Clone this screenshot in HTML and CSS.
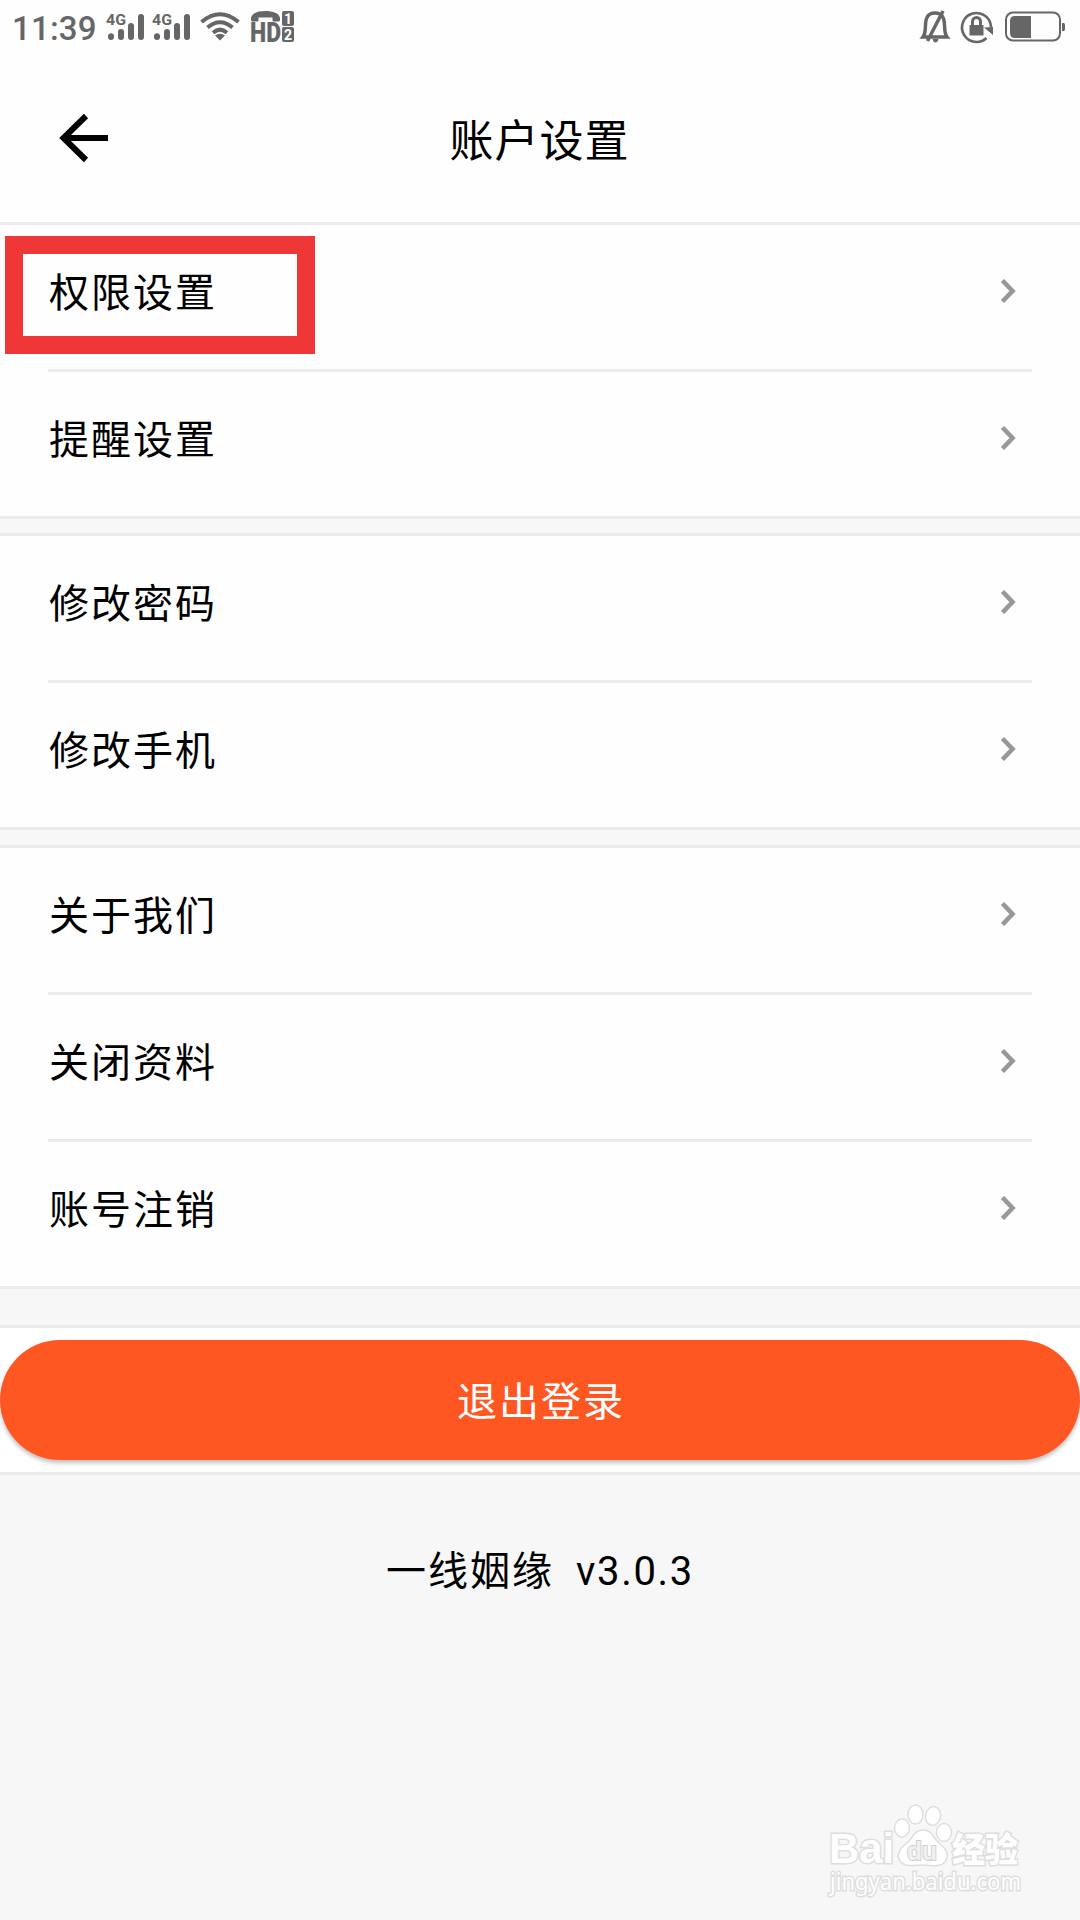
FILE: index.html
```html
<!DOCTYPE html>
<html lang="zh-CN">
<head>
    <meta charset="UTF-8">
    <meta name="viewport" content="width=device-width, initial-scale=1.0">
    <title>账户设置</title>
    <link rel="stylesheet" href="styles.css">
</head>
<body>
    <div class="status-bar">
        <span class="time">11:39</span>
        <svg class="signal" width="39" height="30" viewBox="0 0 39 30">
            <text x="0" y="13.500" class="net" textLength="20" lengthAdjust="spacingAndGlyphs">4G</text>
            <path d="M5 25.300v.6M15 21v4.900M25 15v10.900M35 6v19.900"/>
        </svg>
        <svg class="signal second" width="39" height="30" viewBox="0 0 39 30">
            <text x="0" y="13.500" class="net" textLength="20" lengthAdjust="spacingAndGlyphs">4G</text>
            <path d="M5 25.300v.6M15 21v4.900M25 15v10.900M35 6v19.900"/>
        </svg>
        <svg class="wifi" width="40" height="30" viewBox="0 0 40 30">
            <path d="M1.500 11Q20-4.500 38.500 11M7.500 16.500Q20 6 32.500 16.500M13 21.700Q20 15.500 27 21.700"/>
            <path class="solid" d="M15 24.500Q20 21 25 24.500L20 29.500Z"/>
        </svg>
        <svg class="hd" width="46" height="34" viewBox="0 0 46 34">
            <path d="M1 11V9C2 4 8 2 15.500 2S29 4 30 9v2c0 1-1 1.500-2 1.500h-4c-1 0-1.500-.5-1.500-1.500V8.500h-14V11c0 1-.5 1.500-1.500 1.500H3C2 12.500 1 12 1 11z"/>
            <text x="0" y="33" class="hd-text" textLength="31" lengthAdjust="spacingAndGlyphs">HD</text>
            <rect x="32" y="2" width="12" height="15" rx="2"/>
            <rect x="32" y="18" width="12" height="15" rx="2"/>
            <text x="38" y="14.500" class="sim">1</text>
            <text x="38" y="30.500" class="sim">2</text>
        </svg>
        <div class="status-right">
            <svg class="bell" width="32" height="36" viewBox="0 0 32 36">
                <path d="M4 28C8 23 5 14 8 8.500Q10 4 16 4T24 8.500C27 14 24 23 28 28ZM8.500 32L24 2"/>
                <path class="solid" d="M13.500 30h6q-1 3.500-3 3.500t-3-3.500z"/>
            </svg>
            <svg class="lock" width="34" height="34" viewBox="0 0 34 34">
                <path d="M31 17A14.500 14.500 0 1 0 26.500 28"/>
                <path class="solid" d="M24 17.500L33 17V25ZM9.500 15h14v10.500h-14z"/>
                <path class="shackle" d="M12.500 15v-3.500a4 4 0 0 1 8 0V15"/>
            </svg>
            <svg class="battery" width="62" height="32" viewBox="0 0 62 32">
                <rect class="frame" x="1" y="1.500" width="54" height="28" rx="7"/>
                <path d="M10 5H26V27H10Q5 27 5 22V10Q5 5 10 5ZM57 12h1.500q1.500 0 1.500 2v4q0 2-1.500 2H57z"/>
            </svg>
        </div>
    </div>

    <header class="header">
        <svg class="back" width="50" height="50" viewBox="0 0 50 50">
            <path d="M48 26H4M26 4L3.500 26L26 48"/>
        </svg>
        <h1>账户设置</h1>
    </header>

    <ul class="group first">
        <li><span class="marked">权限设置</span><svg class="arrow" viewBox="0 0 16 26"><path d="M2.500 2.500L12.500 13L2.500 23.500"/></svg></li>
        <li><span>提醒设置</span><svg class="arrow" viewBox="0 0 16 26"><path d="M2.500 2.500L12.500 13L2.500 23.500"/></svg></li>
    </ul>

    <ul class="group">
        <li><span>修改密码</span><svg class="arrow" viewBox="0 0 16 26"><path d="M2.500 2.500L12.500 13L2.500 23.500"/></svg></li>
        <li><span>修改手机</span><svg class="arrow" viewBox="0 0 16 26"><path d="M2.500 2.500L12.500 13L2.500 23.500"/></svg></li>
    </ul>

    <ul class="group">
        <li><span>关于我们</span><svg class="arrow" viewBox="0 0 16 26"><path d="M2.500 2.500L12.500 13L2.500 23.500"/></svg></li>
        <li><span>关闭资料</span><svg class="arrow" viewBox="0 0 16 26"><path d="M2.500 2.500L12.500 13L2.500 23.500"/></svg></li>
        <li><span>账号注销</span><svg class="arrow" viewBox="0 0 16 26"><path d="M2.500 2.500L12.500 13L2.500 23.500"/></svg></li>
    </ul>

    <div class="logout">
        <button type="button">退出登录</button>
    </div>

    <p class="version">一线姻缘<span class="number">v3.0.3</span></p>

    <svg class="watermark" width="200" height="100" viewBox="0 0 200 100">
        <text x="2" y="61" class="brand" textLength="65" lengthAdjust="spacingAndGlyphs">Bai</text>
        <ellipse cx="75" cy="26" rx="7.500" ry="9"/>
        <ellipse cx="88.500" cy="12.500" rx="7.500" ry="9.500"/>
        <ellipse cx="106" cy="14" rx="7.500" ry="9.500" transform="rotate(10 106 14)"/>
        <ellipse cx="117" cy="30.500" rx="7.500" ry="9"/>
        <path d="M96 28C87 28 86 36 80 41C72 47 69 53 73 59C78 66 88 63 96 63S113 66 118 60C123 52 119 47 112 41C106 36 105 28 96 28z"/>
        <text x="80" y="58" class="du" textLength="30" lengthAdjust="spacingAndGlyphs">du</text>
        <text x="125" y="60" class="jingyan" textLength="66" lengthAdjust="spacingAndGlyphs">经验</text>
        <text x="3" y="88" class="site" textLength="191" lengthAdjust="spacingAndGlyphs">jingyan.baidu.com</text>
    </svg>
</body>
</html>
```

FILE: styles.css
```css
*,
*::after {
    box-sizing: border-box;
}
body {
    position: relative;
    margin: 0;
    width: 1080px;
    height: 1920px;
    overflow: hidden;
    font-family: Roboto, 'Noto Sans CJK SC', sans-serif;
    font-size: 40px;
    color: #000;
    background-color: #f7f7f7;
}
svg {
    overflow: visible;
}
.status-bar {
    display: flex;
    align-items: flex-start;
    height: 54px;
    padding: 10px 13px 0 12px;
    background-color: #fefefe;
    color: #666;
    fill: #666;
}
.time {
    width: 94px;
    font-size: 33px;
    line-height: 37px;
    letter-spacing: 0.2px;
    font-weight: 500;
}
.signal {
    margin-top: 1px;
}
.signal path {
    fill: none;
    stroke: #666;
    stroke-width: 6;
    stroke-linecap: round;
}
.second {
    margin-left: 7px;
}
.net {
    font-size: 15px;
    font-weight: 700;
}
.wifi {
    margin: 1px 0 0 9px;
    fill: none;
    stroke: #666;
    stroke-width: 4;
}
.wifi .solid {
    fill: #666;
    stroke: none;
}
.hd {
    margin-left: 10px;
    margin-top: -1px;
}
.hd-text {
    font-size: 27px;
    font-weight: 900;
}
.sim {
    font-size: 14px;
    font-weight: 700;
    text-anchor: middle;
    fill: #fff;
}
.status-right {
    display: flex;
    margin-left: auto;
}
.bell {
    margin-top: -1px;
    fill: none;
    stroke: #666;
    stroke-width: 3.5;
}
.lock {
    margin-left: 9px;
    fill: none;
    stroke: #666;
    stroke-width: 2.6;
}
.bell .solid,
.lock .solid {
    fill: #666;
    stroke: none;
}
.lock .shackle {
    stroke-width: 3;
}
.battery {
    margin: 1px 0 0 11px;
}
.battery .frame {
    fill: none;
    stroke: #666;
    stroke-width: 2;
}
.header {
    display: grid;
    grid-template-columns: 58px 1fr 58px;
    align-items: center;
    height: 171px;
    padding: 0 0 2px;
    background-color: #fefefe;
    border-bottom: 3px solid #ebebef;
}
.back {
    margin-left: 60px;
    fill: none;
    stroke: #000;
    stroke-width: 6;
}
h1 {
    margin: 2px 1px 0 0;
    font-size: 44px;
    font-weight: 400;
    letter-spacing: 1px;
    text-align: center;
}
.group {
    margin: 0 0 15px;
    padding: 0 48px;
    list-style: none;
    background-color: #fefefe;
    border-top: 3px solid #ebebef;
    border-bottom: 3px solid #ebebef;
}
.group.first {
    margin-bottom: 14px;
    border-top: none;
}
.group li {
    display: flex;
    align-items: center;
    justify-content: space-between;
    height: 144px;
    padding: 0 15px 12px 1px;
}
.group li + li {
    height: 147px;
    border-top: 3px solid #ebebef;
}
.group span {
    margin-bottom: 3px;
    letter-spacing: 2px;
}
.marked {
    position: relative;
}
/* red frame around the highlighted entry */
.marked::after {
    content: '';
    position: absolute;
    left: -44px;
    top: 50%;
    width: 310px;
    height: 118px;
    margin-top: -54px;
    border: 18px solid #f03738;
}
.arrow {
    width: 16px;
    height: 26px;
    margin-right: 1px;
    fill: none;
    stroke: #98989a;
    stroke-width: 4.6;
}
.logout {
    margin-top: 36px;
    padding: 12px 0;
    background-color: #fff;
    border-top: 3px solid #ebebef;
    border-bottom: 3px solid #ebebef;
}
.logout button {
    display: block;
    width: 100%;
    height: 120px;
    padding: 0 0 2px 2px;
    border: none;
    border-radius: 60px;
    background-color: #ff5722;
    color: #fff;
    font: inherit;
    letter-spacing: 2px;
    box-shadow: 0 3px 4px rgba(0, 0, 0, 0.25);
}
.version {
    margin: 67px 0 0;
    letter-spacing: 2px;
    line-height: 60px;
    text-align: center;
}
.version .number {
    margin-left: 22px;
    letter-spacing: 1.7px;
}
.watermark {
    position: absolute;
    left: 827px;
    top: 1802px;
    fill: #fff;
    stroke: #dedede;
    stroke-width: 1.5;
}
.watermark text {
    paint-order: stroke;
    stroke-width: 3;
}
.brand {
    font: 700 42px 'Liberation Sans', sans-serif;
}
.watermark .du {
    font: 700 26px 'Liberation Sans', sans-serif;
    fill: #f0f0f0;
    stroke: #d0d0d0;
    stroke-width: 2;
}
.jingyan {
    font: 900 34px 'Noto Sans CJK SC', sans-serif;
}
.site {
    font: 400 23px 'Noto Sans', sans-serif;
}
```
